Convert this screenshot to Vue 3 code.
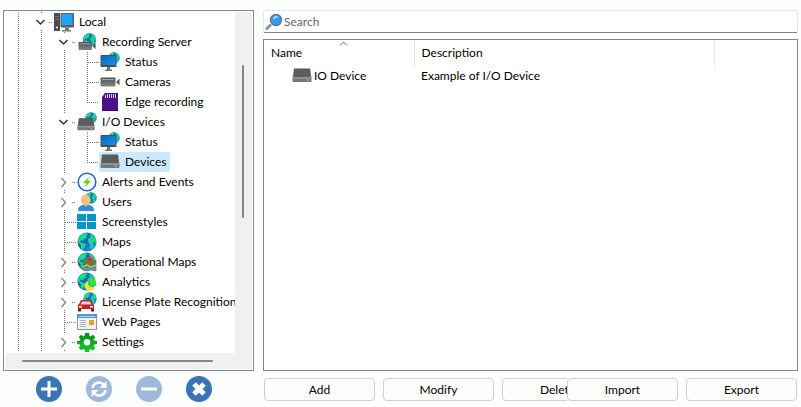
<template>
  <svg class="defs" aria-hidden="true">
    <defs>
      <linearGradient id="sea" x1="0" y1="0" x2="1" y2="1">
        <stop offset="0" stop-color="#1b62ae" />
        <stop offset="0.5" stop-color="#1766bd" />
        <stop offset="1" stop-color="#28a4ff" />
      </linearGradient>
      <linearGradient id="metal" x1="0" y1="0" x2="0" y2="1">
        <stop offset="0" stop-color="#505050" />
        <stop offset="1" stop-color="#858585" />
      </linearGradient>
      <linearGradient id="screen" x1="0" y1="0" x2="1" y2="1">
        <stop offset="0" stop-color="#0868c4" />
        <stop offset="1" stop-color="#1593f2" />
      </linearGradient>
      <linearGradient id="gear" x1="0" y1="0" x2="0" y2="1">
        <stop offset="0" stop-color="#068b16" />
        <stop offset="1" stop-color="#12cc29" />
      </linearGradient>
    </defs>

    <symbol id="globe" viewBox="0 0 20 20">
      <circle cx="10" cy="10" r="9.5" fill="url(#sea)" />
      <path fill="#16d993" d="M2 5 5 2 9 1 11 2 9 4 10 6 7 7 6 9 4 8 3 10 6 11 9 12 8 15 6 18 4 16 4 13 1 10Z" />
      <path fill="#18d68b" d="M12 2 16 3 19 7 19 11 17 9 16 12 17 14 15 17 13 16 13 12 11 10 11 7 14 5Z" />
    </symbol>

    <symbol id="disk" viewBox="0 0 20 14">
      <path fill="url(#metal)" d="M2 0h16l1.500 10H.5Z" />
      <path fill="#5c5c5c" d="M2.500.5h15l1 8h-17Z" />
      <rect x="0.500" y="9" width="19" height="4.500" rx="1" fill="#777" />
      <path stroke="#a4a8aa" d="M.5 9.500h19" />
      <circle cx="16" cy="11.500" r="0.700" fill="#c8e8c8" />
    </symbol>

    <symbol id="camera" viewBox="0 0 20 10">
      <rect x="0.500" y="0.500" width="15" height="9" rx="1" fill="url(#metal)" />
      <path stroke="#a8a8a8" d="M2 2.500h12" />
      <path fill="#555" d="m16 5 3.500-3.500v7L16 5Z" />
    </symbol>

    <symbol id="monitor" viewBox="0 0 17 17">
      <rect x="0.500" y="0.500" width="16" height="12" rx="1" fill="#4b4f52" />
      <path fill="url(#screen)" d="M1.500 1.500h14v9h-14z" />
      <path fill="#707070" d="M7 12.500h3V15h2v1.500H5V15h2Z" />
    </symbol>

    <symbol id="local" viewBox="0 0 20 20">
      <rect x="0" y="1" width="6" height="18" fill="#4c4c4c" />
      <path stroke="#777" d="M1 4.500h4M1 7.500h4" />
      <circle cx="3" cy="15.500" r="1" fill="#fff" />
      <rect x="6.500" y="1" width="13.500" height="14.500" rx="1" fill="#5c5e60" />
      <path fill="#1ea3ff" d="M7.500 2h11v11h-11z" />
      <path fill="#777" d="M11 15.500h4V18h2v1.500H8V18h3Z" />
    </symbol>

    <symbol id="recording" viewBox="0 0 20 20">
      <use href="#globe" x="5.500" y="1" width="14" height="14" />
      <use href="#camera" x="0" y="9.500" width="20" height="9" />
    </symbol>

    <symbol id="status" viewBox="0 0 20 20">
      <use href="#globe" x="8" y="0" width="12" height="12" />
      <use href="#monitor" x="0" y="2" width="17" height="18" />
    </symbol>

    <symbol id="cameras" viewBox="0 0 20 20">
      <use href="#camera" x="0" y="5" width="20" height="10" />
    </symbol>

    <symbol id="card" viewBox="0 0 20 20">
      <path fill="#491181" d="M5 1h13v18H2V5Z" />
      <path stroke="#dac5ef" stroke-width="1" d="M5.500 3v3M7.500 2v4M9.500 2v4M11.500 2v4M13.500 2v4M15.500 2v4" />
      <path stroke="#320768" d="M2 18.500h16" />
    </symbol>

    <symbol id="io" viewBox="0 0 20 20">
      <use href="#globe" x="8" y="0" width="12" height="12" />
      <use href="#disk" x="0" y="6" width="18" height="13" />
    </symbol>

    <symbol id="devices" viewBox="0 0 20 20">
      <use href="#disk" x="0" y="2" width="20" height="15" />
    </symbol>

    <symbol id="alerts" viewBox="0 0 20 20">
      <circle cx="10" cy="10" r="8.800" fill="#fff" stroke="#1968c9" stroke-width="1.600" />
      <path fill="#54d725" d="m13 4-7 7 3.500.5L7 16l7-7-3.500-.5Z" />
    </symbol>

    <symbol id="users" viewBox="0 0 20 20">
      <use href="#globe" x="8" y="0" width="12" height="12" />
      <path fill="#348ce2" d="M1 19c0-5 3-6 6-6h4c4 0 6 2 6 6Z" />
      <path fill="#efc47d" d="M7 12h4l-2 3Z" />
      <ellipse cx="9" cy="8" rx="4.500" ry="5.300" fill="#efc47d" stroke="#cca167" stroke-width="0.500" />
    </symbol>

    <symbol id="tiles" viewBox="0 0 20 20">
      <path fill="#0795cc" d="M0 2h9v7H0zM10 2h9v7h-9zM0 10h9v7H0zM10 10h9v7h-9z" />
    </symbol>

    <symbol id="opmaps" viewBox="0 0 20 20">
      <use href="#globe" x="0" y="0" width="19" height="19" />
      <path fill="#398c52" stroke="#777" stroke-width="0.700" d="m6 8 4-1 4 2 5-1v11l-5-1-4 1-4-1Z" />
      <path fill="#6b8dad" d="m6 16 4-1 4 1 5-2v5l-5-1-4 1-4-1Z" />
      <path fill="none" stroke="#f3ca42" stroke-width="1.200" d="m6 15 4-2 4 2 5-2" />
      <path fill="#ed3c2a" d="m13 12-3-4a3 3 0 1 1 6 0Z" />
      <circle cx="13" cy="7.500" r="1" fill="#8d1d15" />
    </symbol>

    <symbol id="analytics" viewBox="0 0 20 20">
      <use href="#globe" x="0" y="0" width="19" height="19" />
      <path fill="#f7e52a" d="M11 9a5 5 0 1 0 6 7l-5-2Z" />
      <path fill="#41de37" d="M13 12.500V5.500a7 7 0 0 1 6 9Z" />
    </symbol>

    <symbol id="plate" viewBox="0 0 20 20">
      <use href="#globe" x="6" y="0" width="14" height="14" />
      <path fill="#c8201f" d="M4 8h10l2 4 1 1v6h-3v-2H4v2H1v-6l1-1Z" />
      <path fill="#d8dcdf" d="M5 9.500h8l1.500 3h-11Z" />
      <path fill="#fff" d="M2 14h3v1.500H2zM13 14h3v1.500h-3z" />
      <path fill="#7c1111" d="M1 17h3v2.500H1zM14 17h3v2.500h-3z" />
    </symbol>

    <symbol id="web" viewBox="0 0 20 20">
      <rect x="0.500" y="2.500" width="19" height="15" fill="#f1f2f3" stroke="#929698" />
      <path fill="#4a9ad0" d="M0 2h20v4H0z" />
      <path stroke="#a6d6f2" d="M2 4.500h16" />
      <path stroke="#b0b3b5" d="M3 8.500h6M3 10.500h6M3 12.500h6M3 14.500h6" />
      <path fill="#efa019" d="M12 8h5v5h-5z" />
    </symbol>

    <symbol id="settings" viewBox="0 0 20 20">
      <g fill="url(#gear)">
        <path fill-rule="evenodd" d="M8 1h4l.5 3 1 .4 2.500-1.700 2.300 2.600-1.700 2.300.4 1 3 .5v3l-3 .6-.4 1 1.700 2.500-2.500 2.300-2.300-1.500-1 .5-.5 2.500H8l-.5-2.500-1-.5L4 18.300l-2.300-2.500 1.600-2.300-.4-1L0 12V9l3-.6.4-1L1.800 5 4 2.700l2.500 1.700 1-.4ZM10 7a3.300 3.300 0 1 0 0 6.600A3.300 3.300 0 0 0 10 7Z" />
      </g>
    </symbol>

    <symbol id="search" viewBox="0 0 18 18">
      <path stroke="#8a8d90" stroke-width="2.500" d="m1 16.500 5-5" />
      <circle cx="11" cy="7" r="5.500" fill="#2e9df2" stroke="#63788a" stroke-width="1.400" />
      <path fill="#9fdbff" d="M8 5c2-3 5-2 6 0-2-1-4 0-5 2Z" />
    </symbol>
  </svg>

  <main class="window">
    <section class="side">
      <div class="tree-panel">
        <div class="tree" role="tree">
          <div v-for="(node, i) in nodes" :key="i" class="node" role="treeitem" :aria-selected="selected === i">
            <template v-for="(kind, c) in node.cells" :key="c">
              <button v-if="kind === 'open' || kind === 'closed'" class="cell" :aria-label="'Toggle ' + node.label">
                <svg viewBox="0 0 23 20">
                  <path class="dots" :d="lines.toggle" />
                  <path v-if="kind === 'open'" class="chevron open" d="m6.500 8 4 4 4-4" />
                  <path v-else class="chevron" d="m8.500 6 4 4.500-4 4.500" />
                </svg>
              </button>
              <span v-else class="cell">
                <svg viewBox="0 0 23 20"><path class="dots" :d="lines[kind]" /></svg>
              </span>
            </template>
            <button class="item" :class="{ active: selected === i }" @click="selected = i">
              <svg class="icon"><use :href="'#' + node.icon" /></svg>
              <span>{{ node.label }}</span>
            </button>
          </div>
        </div>
        <div class="vbar"><div class="vthumb"></div></div>
        <div class="hbar"><div class="hthumb"></div></div>
      </div>

      <div class="tools">
        <button class="round" aria-label="Add">
          <svg viewBox="0 0 26 26"><path d="M13 5v16M5 13h16" /></svg>
        </button>
        <button class="round" aria-label="Refresh" disabled>
          <svg viewBox="0 0 26 26">
            <path class="thin" d="M6.500 12c1-6 8-7 11-3.500M19.500 14c-1 6-8 7-11 3.500" />
            <path class="head" d="M20.500 5v7h-7ZM5.500 21v-7h7Z" />
          </svg>
        </button>
        <button class="round" aria-label="Remove" disabled>
          <svg viewBox="0 0 26 26"><path d="M5 13h16" /></svg>
        </button>
        <button class="round" aria-label="Close">
          <svg viewBox="0 0 26 26"><path class="cross" d="m8 8 10 10M18 8 8 18" /></svg>
        </button>
      </div>
    </section>

    <section class="content">
      <label class="search">
        <svg class="search-icon"><use href="#search" /></svg>
        <input v-model="query" type="text" placeholder="Search" aria-label="Search" />
      </label>

      <div class="list">
        <table>
          <colgroup>
            <col class="col-name" />
            <col class="col-desc" />
            <col />
          </colgroup>
          <thead>
            <tr>
              <th>
                Name
                <svg class="sort" viewBox="0 0 9 5"><path d="m1 4.500 3.500-3.500L8 4.500" /></svg>
              </th>
              <th>Description</th>
              <td></td>
            </tr>
          </thead>
          <tbody>
            <tr v-for="row in rows" :key="row.name">
              <td>
                <div class="name">
                  <svg class="icon"><use href="#devices" /></svg>
                  <span>{{ row.name }}</span>
                </div>
              </td>
              <td>{{ row.description }}</td>
              <td></td>
            </tr>
          </tbody>
        </table>
      </div>

      <div class="actions">
        <div class="group edit">
          <button class="btn">Add</button>
          <button class="btn">Modify</button>
          <button class="btn">Delete</button>
        </div>
        <div class="group">
          <button class="btn">Import</button>
          <button class="btn">Export</button>
        </div>
      </div>
    </section>
  </main>
</template>

<script setup>
import { ref, computed } from 'vue'

const query = ref('')
const selected = ref(7)

// Each cell is one indent column in front of the icon
const nodes = [
  { label: 'Local', icon: 'local', cells: ['line', 'open'] },
  { label: 'Recording Server', icon: 'recording', cells: ['line', 'line', 'open'] },
  { label: 'Status', icon: 'status', cells: ['line', 'line', 'line', 'tee'] },
  { label: 'Cameras', icon: 'cameras', cells: ['line', 'line', 'line', 'tee'] },
  { label: 'Edge recording', icon: 'card', cells: ['line', 'line', 'line', 'end'] },
  { label: 'I/O Devices', icon: 'io', cells: ['line', 'line', 'open'] },
  { label: 'Status', icon: 'status', cells: ['line', 'line', 'line', 'tee'] },
  { label: 'Devices', icon: 'devices', cells: ['line', 'line', 'line', 'end'] },
  { label: 'Alerts and Events', icon: 'alerts', cells: ['line', 'line', 'closed'] },
  { label: 'Users', icon: 'users', cells: ['line', 'line', 'closed'] },
  { label: 'Screenstyles', icon: 'tiles', cells: ['line', 'line', 'tee'] },
  { label: 'Maps', icon: 'globe', cells: ['line', 'line', 'tee'] },
  { label: 'Operational Maps', icon: 'opmaps', cells: ['line', 'line', 'closed'] },
  { label: 'Analytics', icon: 'analytics', cells: ['line', 'line', 'closed'] },
  { label: 'License Plate Recognition', icon: 'plate', cells: ['line', 'line', 'closed'] },
  { label: 'Web Pages', icon: 'web', cells: ['line', 'line', 'tee'] },
  { label: 'Settings', icon: 'settings', cells: ['line', 'line', 'closed'] }
]

// "toggle" leaves a gap around the chevron
const lines = {
  line: 'M11.5 0v20',
  tee: 'M11.5 0v20M12 10.5h11',
  end: 'M11.5 0v10M11 10.5h12',
  toggle: 'M11.5 0v2M11.5 18v2M19 10.5h4'
}

const devices = [{ name: 'IO Device', description: 'Example of I/O Device' }]

const rows = computed(() => {
  const q = query.value.toLowerCase()
  return devices.filter((d) => d.name.toLowerCase().includes(q))
})
</script>

<style>
body {
  margin: 0;
  background: #fdfefe;
}
</style>

<style scoped>
.defs {
  position: absolute;
  width: 0;
  height: 0;
}

.window {
  display: flex;
  gap: 9px;
  padding: 10px 3px 5px;
  font-family: Lato, "Open Sans", sans-serif;
  font-size: 12px;
  line-height: 20px;
  color: #000;
}

button,
input {
  font: inherit;
  color: inherit;
}

.side {
  flex: none;
  width: 251px;
}

.tree-panel {
  display: grid;
  grid-template-columns: 1fr 17px;
  grid-template-rows: auto 16px;
  padding: 1px;
  border: 1px solid #828790;
  background: #fff;
}

.tree {
  min-width: 0;
  overflow: hidden;
  padding-left: 2px;
  padding-bottom: 1px;
}

.node {
  display: flex;
  height: 20px;
}

.cell {
  flex: none;
  width: 23px;
  height: 20px;
  padding: 0;
  border: 0;
  background: none;
}

.cell svg {
  display: block;
  width: 23px;
  height: 20px;
}

.dots {
  fill: none;
  stroke: #777;
  stroke-dasharray: 1 1;
}

.chevron {
  fill: none;
  stroke: #8c8c8c;
  stroke-width: 1.5;
}

.chevron.open {
  stroke: #333;
}

.item {
  display: flex;
  flex: none;
  gap: 5px;
  padding: 0 4px 0 1px;
  border: 0;
  border-radius: 2px;
  background: none;
  white-space: nowrap;
}

.item.active {
  background: #cce8ff;
}

.icon {
  flex: none;
  width: 20px;
  height: 20px;
}

.vbar,
.hbar {
  background: #f0f0f0;
}

.vbar {
  padding: 53px 7px 0;
}

.vthumb {
  width: 2px;
  height: 153px;
  border-radius: 1px;
  background: #858585;
}

.hbar {
  grid-column: 1 / 3;
  padding: 7px 0 0 17px;
}

.hthumb {
  width: 191px;
  height: 2px;
  border-radius: 1px;
  background: #858585;
}

.tools {
  display: flex;
  gap: 24px;
  padding: 5px 0 0 33px;
}

.round {
  width: 26px;
  height: 26px;
  padding: 0;
  border: 0;
  border-radius: 50%;
  background: #3a74b4;
}

.round:disabled {
  background: #9db9d9;
}

.round svg {
  display: block;
  fill: none;
  stroke: #fff;
  stroke-width: 3;
}

.round .thin {
  stroke-width: 2.5;
}

.round .head {
  fill: #fff;
  stroke: none;
}

.round .cross {
  stroke-width: 5;
}

.content {
  display: flex;
  flex: 1;
  flex-direction: column;
  min-width: 0;
}

.search {
  display: flex;
  align-items: center;
  height: 21px;
  padding-left: 1px;
  border: 1px solid #e6e6e6;
  border-bottom-color: #828282;
  border-radius: 2px;
  background: #fff;
}

.search-icon {
  flex: none;
  width: 18px;
  height: 18px;
}

.search input {
  flex: 1;
  min-width: 0;
  padding: 0 1px;
  border: 0;
  outline: 0;
  background: none;
}

.search input::placeholder {
  color: #666;
  opacity: 1;
}

.list {
  flex: 1;
  margin-top: 6px;
  border: 1px solid #828790;
  background: #fff;
}

table {
  width: 100%;
  border-collapse: collapse;
  table-layout: fixed;
}

.col-name {
  width: 150px;
}

.col-desc {
  width: 300px;
}

th,
td {
  padding: 0 7px;
  text-align: left;
  font-weight: 400;
}

th {
  position: relative;
  height: 26px;
  border-right: 1px solid #e5e5e5;
}

td:first-child {
  padding-left: 28px;
}

.sort {
  position: absolute;
  top: 1px;
  left: 50%;
  width: 9px;
  height: 5px;
  fill: none;
  stroke: #666;
}

.name {
  display: flex;
  gap: 2px;
}

.actions {
  display: flex;
  padding: 7px 1px 1px;
}

.group {
  display: flex;
  flex: none;
  gap: 8px;
}

.group.edit {
  flex: 1;
  min-width: 0;
  overflow: hidden;
}

.btn {
  flex: none;
  width: 111px;
  height: 23px;
  padding: 0;
  border: 1px solid #d0d0d0;
  border-radius: 4px;
  background: #fdfdfd;
  line-height: 20px;
}
</style>
